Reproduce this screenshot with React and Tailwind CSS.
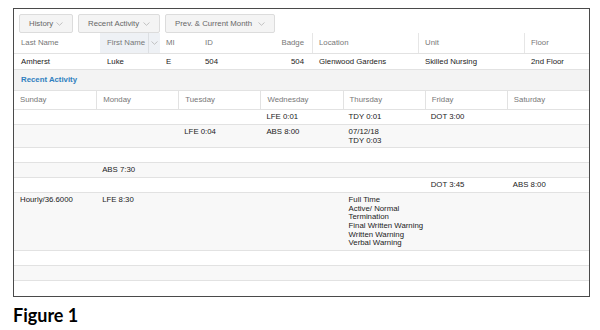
import React from 'react';

const Chevron = ({ className = '' }) => (
  <svg width="7" height="4" viewBox="0 0 7 4" className={className}>
    <polyline points="0.5,0.5 3.5,3.3 6.5,0.5" fill="none" stroke="#b5b5b5" strokeWidth="0.8" />
  </svg>
);

const FilterButton = ({ label, width }) => (
  <div className={`flex items-center justify-between h-[19px] px-[9px] bg-[#f4f4f4] border border-[#dcdcdc] rounded-[2px] text-[#666] ${width}`}>
    <span>{label}</span>
    <Chevron />
  </div>
);

const days = ['Sunday', 'Monday', 'Tuesday', 'Wednesday', 'Thursday', 'Friday', 'Saturday'];

// each row: array of 7 cells, a cell is a list of lines
const activity = [
  [[], [], [], ['LFE 0:01'], ['TDY 0:01'], ['DOT 3:00'], []],
  [[], [], ['LFE 0:04'], ['ABS 8:00'], ['07/12/18', 'TDY 0:03'], [], []],
  [[], [], [], [], [], [], []],
  [[], ['ABS 7:30'], [], [], [], [], []],
  [[], [], [], [], [], ['DOT 3:45'], ['ABS 8:00']],
  [
    ['Hourly/36.6000'],
    ['LFE 8:30'],
    [],
    [],
    ['Full Time', 'Active/ Normal', 'Termination', 'Final Written Warning', 'Written Warning', 'Verbal Warning'],
    [],
    [],
  ],
  [[], [], [], [], [], [], []],
  [[], [], [], [], [], [], []],
  [[], [], [], [], [], [], []],
];

export default function App() {
  return (
    <div className="w-[600px] h-[330px] bg-white font-['Liberation_Sans',Arial,sans-serif] text-[7.8px] pt-[8px] pl-[13px]">
      <div className="w-[577px] border border-[#4a4a4a] flex flex-col">
        {/* filters */}
        <div className="flex gap-[5px] pl-[5px] pt-[5px]">
          <FilterButton label="History" width="w-[54px]" />
          <FilterButton label="Recent Activity" width="w-[82px]" />
          <FilterButton label="Prev. & Current Month" width="w-[110px]" />
        </div>

        {/* employee header */}
        <div className="flex h-[21px] border-b border-[#e2e2e2] text-[#777] whitespace-nowrap">
          <div className="w-[86px] flex items-center pl-[7px]">Last Name</div>
          <div className="w-[60px] flex items-center bg-[#eef1f5] pl-[7px]">
            <span className="flex-1">First Name</span>
            <div className="h-full border-l border-[#dcdfe3] flex items-center px-[2px]">
              <Chevron />
            </div>
          </div>
          <div className="w-[40px] flex items-center pl-[6px]">MI</div>
          <div className="w-[60px] flex items-center pl-[5px]">ID</div>
          <div className="w-[52px] flex items-center justify-end pr-[8px]">Badge</div>
          <div className="w-[106px] flex items-center pl-[6px] border-l border-[#e6e6e6]">Location</div>
          <div className="w-[106px] flex items-center pl-[6px] border-l border-[#e6e6e6]">Unit</div>
          <div className="flex-1 flex items-center pl-[6px] border-l border-[#e6e6e6]">Floor</div>
        </div>
        <div className="flex h-[16px] border-b border-[#e2e2e2] text-[#222] whitespace-nowrap">
          <div className="w-[86px] flex items-center pl-[7px]">Amherst</div>
          <div className="w-[60px] flex items-center pl-[7px]">Luke</div>
          <div className="w-[40px] flex items-center pl-[6px]">E</div>
          <div className="w-[60px] flex items-center pl-[5px]">504</div>
          <div className="w-[52px] flex items-center justify-end pr-[8px]">504</div>
          <div className="w-[106px] flex items-center pl-[7px]">Glenwood Gardens</div>
          <div className="w-[106px] flex items-center pl-[7px]">Skilled Nursing</div>
          <div className="flex-1 flex items-center pl-[7px]">2nd Floor</div>
        </div>

        {/* recent activity band */}
        <div className="h-[21px] bg-[#f3f3f3] border-b border-[#e2e2e2] flex items-center pl-[7px] font-bold text-[#2f7fbf]">
          Recent Activity
        </div>

        {/* days header */}
        <div className="grid grid-cols-7 h-[19px] border-b border-[#e2e2e2] text-[#777]">
          {days.map((d, i) => (
            <div key={d} className={`flex items-center pl-[6px] ${i > 0 ? 'border-l border-[#e2e2e2]' : ''}`}>
              {d}
            </div>
          ))}
        </div>

        {/* activity rows */}
        {activity.map((row, r) => (
          <div
            key={r}
            className={`grid grid-cols-7 min-h-[15px] pt-[3px] pb-[2px] border-b last:border-b-0 border-[#e2e2e2] text-[#222] leading-[8.6px] whitespace-nowrap ${r % 2 === 1 ? 'bg-[#f8f8f8]' : 'bg-white'}`}
          >
            {row.map((cell, c) => (
              <div key={c} className="pl-[6px]">
                {cell.map((line) => (
                  <div key={line}>{line}</div>
                ))}
              </div>
            ))}
          </div>
        ))}
      </div>

      <div className="mt-[7px] font-['Lato',sans-serif] font-bold text-[18px] leading-[22px] text-black">Figure 1</div>
    </div>
  );
}
